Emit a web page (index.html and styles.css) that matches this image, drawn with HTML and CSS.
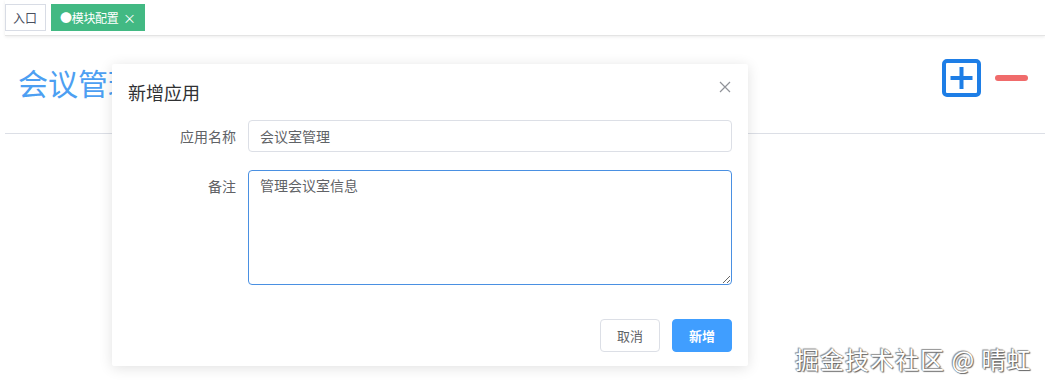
FILE: index.html
```html
<!DOCTYPE html>
<html lang="zh-CN">
<head>
  <meta charset="UTF-8">
  <title>模块配置</title>
  <link rel="stylesheet" href="styles.css">
</head>
<body>

  <div class="tags">
    <span class="tag">入口</span>
    <span class="tag tag-active">●模块配置 <span class="tag-close">×</span></span>
  </div>

  <div class="page">
    <div class="page-head">
      <h1 class="page-title">会议管理</h1>
      <div class="tools">
        <svg class="icon-add" width="40" height="38" viewBox="0 0 40 38">
          <rect x="2" y="2" width="35" height="34" rx="3" fill="none" stroke="#1e7ee6" stroke-width="4"/>
          <path d="M19.5 8 V30 M8.5 19 H30.5" stroke="#1e7ee6" stroke-width="4"/>
        </svg>
        <span class="icon-minus"></span>
      </div>
    </div>
  </div>

  <div class="dialog">
    <div class="dialog-header">
      <span class="dialog-title">新增应用</span>
      <span class="dialog-close">
        <svg width="12" height="12" viewBox="0 0 12 12"><path d="M1 1 L11 11 M11 1 L1 11" stroke="#909399" stroke-width="1.2"/></svg>
      </span>
    </div>
    <form class="dialog-body">
      <div class="form-row">
        <label class="form-label">应用名称</label>
        <input class="form-input" type="text" value="会议室管理">
      </div>
      <div class="form-row">
        <label class="form-label">备注</label>
        <textarea class="form-textarea">管理会议室信息</textarea>
      </div>
    </form>
    <div class="dialog-footer">
      <button class="btn" type="button">取消</button>
      <button class="btn btn-primary" type="button">新增</button>
    </div>
  </div>

  <div class="watermark">掘金技术社区 @ 晴虹</div>

</body>
</html>
```

FILE: styles.css
```css
body {
  font-family: 'Noto Sans CJK SC', 'Noto Sans', sans-serif;
  margin: 0;
  padding: 0;
  background-color: #fff;
  width: 1045px;
  height: 389px;
  overflow: hidden;
  position: relative;
}

.tags {
  height: 36px;
  box-sizing: border-box;
  display: flex;
  align-items: center;
  gap: 5px;
  margin-left: 5px;
  border-bottom: 1px solid #e4e4e4;
  box-shadow: 0 1px 3px rgba(0, 0, 0, 0.08);
}

.tag {
  height: 27px;
  line-height: 25px;
  box-sizing: border-box;
  border: 1px solid #d8dce5;
  padding: 0 8px 0 7px;
  font-size: 12px;
  color: #495060;
}

.tag-active {
  background-color: #42b983;
  border-color: #42b983;
  color: #fff;
  padding: 0 8px;
  letter-spacing: -0.3px;
}

.tag-close {
  margin-left: 2px;
  font-size: 13px;
}

.page {
  padding: 0 0 0 5px;
}

.page-head {
  height: 97px;
  display: flex;
  justify-content: space-between;
  align-items: center;
  border-bottom: 1px solid #dcdfe6;
}

.page-title {
  margin: 0 0 0 13px;
  font-size: 30px;
  font-weight: normal;
  color: #4d9ff2;
  padding-bottom: 6px;
}

.tools {
  display: flex;
  align-items: center;
  gap: 13px;
  margin-right: 17px;
  padding-bottom: 13px;
}

.icon-add {
  display: block;
}

.icon-minus {
  display: block;
  width: 33px;
  height: 6px;
  border-radius: 3px;
  background-color: #f06b6b;
}

.dialog {
  position: absolute;
  left: 112px;
  top: 64px;
  width: 636px;
  height: 302px;
  background-color: #fff;
  box-shadow: 0 2px 14px rgba(0, 0, 0, 0.12);
  border-radius: 2px;
}

.dialog-header {
  display: flex;
  justify-content: space-between;
  align-items: center;
  padding: 14px 16px 0 16px;
  height: 28px;
}

.dialog-title {
  font-size: 18px;
  color: #303133;
  line-height: 24px;
}

.dialog-close {
  margin-top: -12px;
  margin-right: 1px;
}

.dialog-body {
  padding: 14px 16px 0 16px;
  margin: 0;
}

.form-row {
  display: flex;
  margin-bottom: 18px;
}

.form-label {
  width: 120px;
  padding-right: 12px;
  box-sizing: border-box;
  text-align: right;
  font-size: 14px;
  color: #606266;
  line-height: 32px;
}

.form-input,
.form-textarea {
  width: 484px;
  box-sizing: border-box;
  border: 1px solid #dcdfe6;
  border-radius: 4px;
  font-family: inherit;
  font-size: 14px;
  color: #606266;
  padding: 0 11px;
}

.form-input {
  height: 32px;
}

.form-textarea {
  height: 115px;
  padding-top: 3px;
  border-color: #4a90e2;
  outline: none;
  resize: vertical;
  line-height: 22px;
}

.dialog-footer {
  display: flex;
  justify-content: flex-end;
  gap: 12px;
  padding: 0 16px;
  margin-top: 34px;
}

.btn {
  width: 60px;
  height: 33px;
  border: 1px solid #dcdfe6;
  border-radius: 4px;
  background-color: #fff;
  color: #606266;
  font-family: inherit;
  font-size: 13px;
  cursor: pointer;
}

.btn-primary {
  background-color: #409eff;
  border-color: #409eff;
  color: #fff;
  font-weight: bold;
}

.watermark {
  position: absolute;
  left: 795px;
  top: 341px;
  font-size: 24px;
  letter-spacing: 1px;
  color: #fff;
  text-shadow: 0 0 1px #555, 1px 1px 1px #666, -1px -1px 1px #999;
}
```
